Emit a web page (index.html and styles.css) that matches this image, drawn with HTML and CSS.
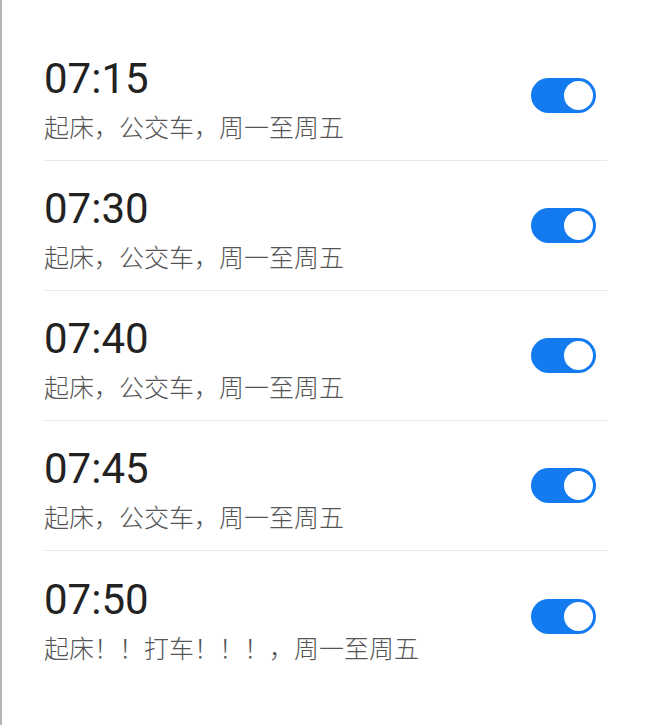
FILE: index.html
```html
<!DOCTYPE html>
<html lang="zh-CN">
<head>
    <meta charset="UTF-8">
    <meta name="viewport" content="width=device-width, initial-scale=1.0">
    <title>闹钟</title>
    <link rel="stylesheet" href="styles.css">
</head>
<body>
    <div class="alarm-list">
        <div class="alarm-row">
            <div class="alarm-info">
                <div class="alarm-time">07:15</div>
                <div class="alarm-desc">起床，公交车，周一至周五</div>
            </div>
            <div class="switch on"><span class="knob"></span></div>
        </div>
        <div class="alarm-row">
            <div class="alarm-info">
                <div class="alarm-time">07:30</div>
                <div class="alarm-desc">起床，公交车，周一至周五</div>
            </div>
            <div class="switch on"><span class="knob"></span></div>
        </div>
        <div class="alarm-row">
            <div class="alarm-info">
                <div class="alarm-time">07:40</div>
                <div class="alarm-desc">起床，公交车，周一至周五</div>
            </div>
            <div class="switch on"><span class="knob"></span></div>
        </div>
        <div class="alarm-row">
            <div class="alarm-info">
                <div class="alarm-time">07:45</div>
                <div class="alarm-desc">起床，公交车，周一至周五</div>
            </div>
            <div class="switch on"><span class="knob"></span></div>
        </div>
        <div class="alarm-row">
            <div class="alarm-info">
                <div class="alarm-time">07:50</div>
                <div class="alarm-desc">起床！！打车！！！，周一至周五</div>
            </div>
            <div class="switch on"><span class="knob"></span></div>
        </div>
    </div>
</body>
</html>
```

FILE: styles.css
```css
body {
    margin: 0;
    background-color: #fff;
    font-family: Roboto, "Noto Sans CJK SC", sans-serif;
}
.alarm-list {
    box-sizing: border-box;
    height: 725px;
    border-left: 2px solid #b5b5b5;
    padding: 31px 43px 0 42px;
}
.alarm-row {
    box-sizing: border-box;
    height: 130px;
    display: flex;
    align-items: center;
    justify-content: space-between;
    border-bottom: 1px solid #e9e9e9;
}
.alarm-row:last-child {
    border-bottom: none;
}
.alarm-info {
    margin-top: 8px;
}
.alarm-time {
    font-size: 42px;
    line-height: 48px;
    color: #222;
}
.alarm-desc {
    margin-top: 5px;
    font-family: "Noto Sans CJK SC", sans-serif;
    font-size: 25px;
    font-weight: 300;
    line-height: 36px;
    color: #555;
}
.switch {
    box-sizing: border-box;
    width: 65px;
    height: 35px;
    margin-right: 11px;
    border-radius: 18px;
    background-color: #137af0;
    padding: 3px;
    display: flex;
}
.switch.on {
    justify-content: flex-end;
}
.knob {
    width: 29px;
    height: 29px;
    border-radius: 50%;
    background-color: #fff;
}
```
